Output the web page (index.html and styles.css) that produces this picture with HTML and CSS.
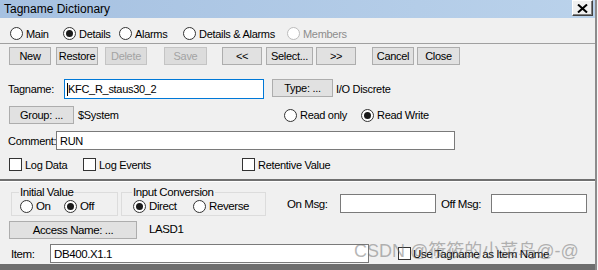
FILE: index.html
```html
<!DOCTYPE html>
<html lang="en">
<head>
    <meta charset="UTF-8">
    <title>Tagname Dictionary</title>
    <link rel="stylesheet" href="styles.css">
</head>
<body>
    <div class="window">
        <div class="titlebar">
            <span class="title">Tagname Dictionary</span>
            <span class="close-btn">
                <svg width="11" height="9" viewBox="0 0 11 9"><path d="M1 0.5 L10 8.5 M10 0.5 L1 8.5" stroke="#000" stroke-width="2"/></svg>
            </span>
        </div>

        <div class="upper">
            <div class="tabs">
                <label class="radio tab-main"><span class="dot"></span>Main</label>
                <label class="radio tab-details"><span class="dot on"></span>Details</label>
                <label class="radio tab-alarms"><span class="dot"></span>Alarms</label>
                <label class="radio tab-both"><span class="dot"></span>Details &amp; Alarms</label>
                <label class="radio disabled"><span class="dot"></span>Members</label>
            </div>

            <div class="toolbar">
                <span class="btn b-new">New</span>
                <span class="btn b-restore">Restore</span>
                <span class="btn b-delete disabled">Delete</span>
                <span class="btn b-save disabled">Save</span>
                <span class="btn b-prev">&lt;&lt;</span>
                <span class="btn b-select">Select...</span>
                <span class="btn b-next">&gt;&gt;</span>
                <span class="btn b-cancel">Cancel</span>
                <span class="btn b-close">Close</span>
            </div>

            <div class="row row-tag">
                <span class="lbl tag-lbl">Tagname:</span>
                <div class="field focus tag-field"><span class="caret"></span>KFC_R_staus30_2</div>
                <span class="btn b-type">Type: ...</span>
                <span class="lbl type-val">I/O Discrete</span>
            </div>

            <div class="row row-group">
                <span class="btn b-group">Group: ...</span>
                <span class="lbl group-val">$System</span>
                <label class="radio r-readonly"><span class="dot"></span>Read only</label>
                <label class="radio"><span class="dot on"></span>Read Write</label>
            </div>

            <div class="row row-comment">
                <span class="lbl comment-lbl">Comment:</span>
                <div class="field comment-field">RUN</div>
            </div>

            <div class="row row-checks">
                <label class="check c-logdata"><span class="box"></span>Log Data</label>
                <label class="check c-logevents"><span class="box"></span>Log Events</label>
                <label class="check"><span class="box"></span>Retentive Value</label>
            </div>
        </div>

        <div class="lower">
            <div class="row row-conv">
                <fieldset class="group g-initial">
                    <legend>Initial Value</legend>
                    <label class="radio r-on"><span class="dot"></span>On</label>
                    <label class="radio"><span class="dot on"></span>Off</label>
                </fieldset>
                <fieldset class="group g-input">
                    <legend>Input Conversion</legend>
                    <label class="radio r-direct"><span class="dot on"></span>Direct</label>
                    <label class="radio"><span class="dot"></span>Reverse</label>
                </fieldset>
                <div class="msgs">
                    <span class="lbl on-lbl">On Msg:</span>
                    <div class="field msg-field"></div>
                    <span class="lbl off-lbl">Off Msg:</span>
                    <div class="field msg-field"></div>
                </div>
            </div>

            <div class="row row-access">
                <span class="btn b-access">Access Name: ...</span>
                <span class="lbl access-val">LASD1</span>
            </div>

            <div class="row row-item">
                <span class="lbl item-lbl">Item:</span>
                <div class="field item-field">DB400.X1.1</div>
                <label class="check c-use"><span class="box"></span>Use Tagname as Item Name</label>
            </div>

            <div class="watermark">CSDN @筱筱的小菜鸟@-@</div>
        </div>

        <div class="bottom-band"></div>
    </div>
</body>
</html>
```

FILE: styles.css
```css
body {
    margin: 0;
    background-color: #f7f7f7;
    font-family: "Liberation Sans", Arial, sans-serif;
    font-size: 11px;
    letter-spacing: -0.3px;
    color: #000;
}
.window {
    width: 595px;
    height: 270px;
    background-color: #f0f0f0;
    border-right: 2px solid #8c8c8c;
    display: flex;
    flex-direction: column;
    overflow: hidden;
}
.titlebar {
    height: 18px;
    flex: none;
    display: flex;
    align-items: center;
    padding-left: 4px;
    background: linear-gradient(to right, #a6c1e1, #bad2eb);
}
.title {
    font-size: 12px;
    letter-spacing: 0;
}
.close-btn {
    box-sizing: border-box;
    width: 21px;
    height: 16px;
    margin-left: auto;
    margin-right: 2px;
    align-self: flex-start;
    display: flex;
    align-items: center;
    justify-content: center;
    background-color: #f0f0f0;
    border: 1px solid;
    border-color: #fff #404040 #404040 #fff;
    box-shadow: inset -1px -1px #808080;
}

/* upper part */
.upper {
    padding-bottom: 8px;
}
.tabs {
    display: flex;
    align-items: center;
    height: 19px;
    padding: 6px 0 0 10px;
    border-bottom: 1px solid #a0a0a0;
}
.tab-main { width: 53px; }
.tab-details { width: 56px; }
.tab-alarms { width: 64px; }
.tab-both { width: 104px; }

.radio {
    display: inline-flex;
    align-items: center;
    gap: 3px;
    white-space: nowrap;
}
.dot {
    box-sizing: border-box;
    width: 13px;
    height: 13px;
    border: 1px solid #333;
    border-radius: 50%;
    background-color: #fff;
    position: relative;
    flex: none;
}
.dot.on::after {
    content: "";
    position: absolute;
    left: 2px;
    top: 2px;
    width: 7px;
    height: 7px;
    border-radius: 50%;
    background-color: #1a1a1a;
}
.radio.disabled { color: #8d8d8d; }
.radio.disabled .dot { border-color: #bcbcbc; }

.check {
    display: inline-flex;
    align-items: center;
    gap: 3px;
    white-space: nowrap;
}
.box {
    box-sizing: border-box;
    width: 13px;
    height: 13px;
    border: 1px solid #333;
    background-color: #fff;
    flex: none;
}

.toolbar {
    display: flex;
    padding: 3px 0 0 9px;
}
.btn {
    box-sizing: border-box;
    height: 18px;
    width: 42px;
    flex: none;
    display: flex;
    align-items: center;
    justify-content: center;
    border: 1px solid #adadad;
    background-color: #e1e1e1;
    white-space: nowrap;
}
.btn.disabled {
    color: #a3a3a3;
    border-color: #c4c4c4;
    background-color: #dcdcdc;
}
.b-restore { margin-left: 5px; }
.b-delete { margin-left: 7px; }
.b-save { margin-left: 17px; width: 43px; }
.b-prev { margin-left: 15px; width: 40px; }
.b-select { margin-left: 4px; width: 47px; }
.b-next { margin-left: 3px; width: 40px; }
.b-cancel { margin-left: 16px; }
.b-close { margin-left: 3px; width: 43px; }

.row {
    display: flex;
    align-items: center;
}
.lbl { white-space: nowrap; }

.field {
    box-sizing: border-box;
    height: 20px;
    border: 1px solid #7a7a7a;
    background-color: #fff;
    display: flex;
    align-items: center;
    padding-left: 3px;
    flex: none;
}
.field.focus { border-color: #0078d7; }
.caret {
    width: 1px;
    height: 13px;
    background-color: #000;
}

.row-tag {
    margin-top: 14px;
    padding-left: 8px;
    height: 20px;
}
.tag-lbl { width: 56px; }
.tag-field {
    width: 200px;
    padding-left: 2px;
}
.b-type {
    width: 61px;
    margin: 0 0 2px 8px;
}
.type-val { margin-left: 3px; }

.row-group {
    margin-top: 7px;
    padding-left: 9px;
    height: 18px;
}
.b-group { width: 65px; }
.group-val { margin-left: 4px; width: 206px; }
.r-readonly { width: 77px; }

.row-comment {
    margin-top: 7px;
    padding-left: 8px;
}
.comment-lbl { width: 48px; }
.comment-field {
    width: 399px;
    height: 19px;
}

.row-checks {
    margin-top: 8px;
    padding-left: 9px;
    height: 13px;
}
.c-logdata { width: 74px; }
.c-logevents { width: 159px; }

/* lower part */
.lower {
    flex: 1;
    position: relative;
    border-top: 2px solid #707070;
    box-shadow: inset 0 1px #fff;
    font-size: 11.5px;
    letter-spacing: -0.4px;
}
.row-conv {
    align-items: flex-start;
    margin-top: 4px;
}
.group {
    box-sizing: border-box;
    margin: 0;
    border: 1px solid #dcdcdc;
    padding: 0 0 3px 8px;
    display: flex;
    align-items: center;
    height: 31px;
}
.group legend {
    padding: 0 1px;
    margin-left: -1px;
    line-height: 15px;
}
.g-initial {
    width: 107px;
    margin-left: 11px;
}
.r-on { width: 44px; }
.g-input {
    width: 145px;
    margin-left: 3px;
    padding-left: 11px;
}
.r-direct { width: 60px; }
.msgs {
    display: flex;
    align-items: center;
    margin: 9px 0 0 21px;
}
.msg-field {
    width: 96px;
    height: 19px;
}
.on-lbl { width: 53px; }
.off-lbl { margin-left: 5px; width: 50px; }

.row-access {
    margin-top: 5px;
    padding-left: 9px;
    align-items: flex-start;
}
.b-access { width: 128px; }
.access-val {
    margin-left: 12px;
    line-height: 16px;
}

.row-item {
    margin-top: 5px;
    padding-left: 11px;
}
.item-lbl { width: 39px; }
.item-field {
    width: 319px;
    height: 19px;
}
.c-use {
    margin-left: 29px;
    gap: 2px;
}

.watermark {
    position: absolute;
    left: 354px;
    top: 55px;
    font-family: "Liberation Sans", "Noto Sans CJK SC", sans-serif;
    font-size: 18px;
    letter-spacing: 0;
    color: rgba(110, 110, 110, 0.5);
    white-space: nowrap;
}

.bottom-band {
    height: 6px;
    flex: none;
    background-color: #6e6e6e;
}
```
